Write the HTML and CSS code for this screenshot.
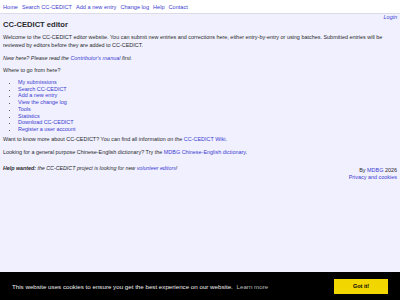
FILE: index.html
```html
<!DOCTYPE html>
<html lang="en">
<head>
    <meta charset="UTF-8">
    <meta name="viewport" content="width=device-width, initial-scale=1.0">
    <title>CC-CEDICT editor</title>
    <link rel="stylesheet" href="styles.css">
</head>
<body>
    <!-- Top menu -->
    <div class="menu">
        <a href="#">Home</a>
        <a href="#">Search CC-CEDICT</a>
        <a href="#">Add a new entry</a>
        <a href="#">Change log</a>
        <a href="#">Help</a>
        <a href="#">Contact</a>
    </div>

    <div class="content">
        <div class="login"><a href="#">Login</a></div>

        <h1>CC-CEDICT editor</h1>

        <p>Welcome to the CC-CEDICT editor website. You can submit new entries and corrections here, either entry-by-entry or using batches. Submitted entries will be reviewed by editors before they are added to CC-CEDICT.</p>

        <p class="newhere">New here? Please read the <a href="#">Contributor's manual</a> first.</p>

        <p>Where to go from here?</p>

        <ul class="links">
            <li><a href="#">My submissions</a></li>
            <li><a href="#">Search CC-CEDICT</a></li>
            <li><a href="#">Add a new entry</a></li>
            <li><a href="#">View the change log</a></li>
            <li><a href="#">Tools</a></li>
            <li><a href="#">Statistics</a></li>
            <li><a href="#">Download CC-CEDICT</a></li>
            <li><a href="#">Register a user account</a></li>
        </ul>

        <p>Want to know more about CC-CEDICT? You can find all information on the <a href="#">CC-CEDICT Wiki</a>.</p>

        <p>Looking for a general purpose Chinese-English dictionary? Try the <a href="#">MDBG Chinese-English dictionary</a>.</p>

        <div class="footer">
            <div class="help"><b>Help wanted:</b> the CC-CEDICT project is looking for new <a href="#">volunteer editors</a>!</div>
            <div class="credits">
                By <a href="#">MDBG</a> 2026<br>
                <a href="#">Privacy and cookies</a>
            </div>
        </div>
    </div>

    <!-- Cookie banner -->
    <div class="cookie-bar">
        <span class="cookie-msg">This website uses cookies to ensure you get the best experience on our website. <a href="#">Learn more</a></span>
        <a class="cookie-btn" href="#">Got it!</a>
    </div>
</body>
</html>
```

FILE: styles.css
```css
body {
    margin: 0;
    background-color: #f0f0ff;
    color: #2a2a2a;
    font-family: "Liberation Sans", Arial, sans-serif;
    font-size: 5.45px;
}

a {
    color: #3c3cd0;
    text-decoration: none;
}

.menu {
    background-color: #fff;
    border-bottom: 1px solid #dcdce8;
    height: 13px;
    padding: 0 3px;
    display: flex;
    align-items: center;
    gap: 4px;
    font-size: 5.6px;
}

.content {
    display: flow-root;
    padding: 0 3px;
}

.login {
    float: right;
    font-style: italic;
    font-size: 5.5px;
    line-height: 7px;
}

h1 {
    font-size: 7.6px;
    line-height: 10px;
    margin: 6px 0 3px;
}

p {
    margin: 0 0 4.7px;
    line-height: 8px;
}

.newhere {
    font-style: italic;
}

.links {
    margin: 4.6px 0 2.7px;
    padding-left: 15px;
    line-height: 6.7px;
}

.links li::marker {
    font-size: 4px;
    color: #333;
}

.footer {
    display: flex;
    justify-content: space-between;
    margin-top: 9px;
}

.help {
    font-style: italic;
    font-size: 5.3px;
    line-height: 6.7px;
}

.credits {
    text-align: right;
    line-height: 6.7px;
    padding-top: 2px;
}

.cookie-bar {
    position: fixed;
    left: 0;
    right: 0;
    bottom: 0;
    height: 28px;
    background-color: #000;
    color: #eee;
    display: flex;
    align-items: center;
    justify-content: space-between;
    padding: 0 12px;
    font-size: 6.2px;
}

.cookie-msg a {
    color: #bbb;
    margin-left: 2px;
}

.cookie-btn {
    background-color: #f1d600;
    color: #000;
    font-weight: bold;
    width: 54px;
    height: 15px;
    display: flex;
    align-items: center;
    justify-content: center;
    font-size: 5.5px;
}
```
